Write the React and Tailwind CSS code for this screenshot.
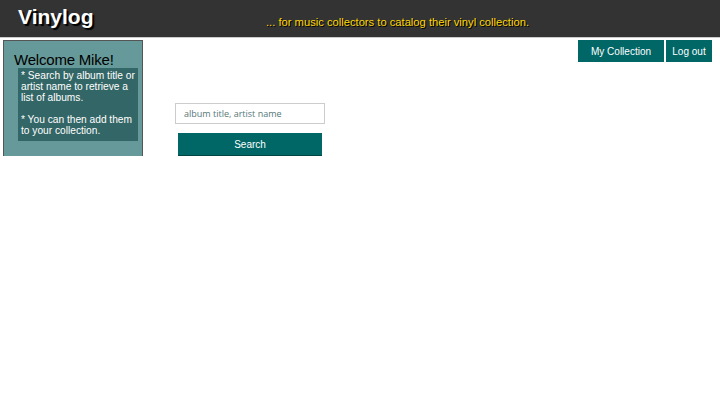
export default function App() {
  return (
    <div className="w-[720px] h-[400px] bg-white" style={{ fontFamily: '"Liberation Sans", Arial, sans-serif' }}>
      <header className="h-[37px] bg-[#333333] flex items-center border-b border-[#cccccc] box-content">
        <div className="pl-[18px] w-[250px] text-white font-bold text-[21px] [text-shadow:2px_2px_1px_#000] leading-none -mt-[4px]">Vinylog</div>
        <div className="text-[#ffd700] text-[11.2px] mt-[8px] [text-shadow:1px_1px_0_#000] ml-[16px]">... for music collectors to catalog their vinyl collection.</div>
      </header>
      <div className="flex items-start pt-[2px]">
        <div className="ml-[3px] w-[140px] h-[116px] bg-[#669999] border border-[#555] border-b-0 pt-[10px] pl-[10px]">
          <div className="text-[15px] text-black leading-[17px] tracking-[-0.2px]">Welcome Mike!</div>
          <div className="ml-[4px] w-[120px] bg-[#336666] text-white text-[10.2px] leading-[11px] pl-[3px] pt-[2px] h-[73px] whitespace-nowrap">
            <p>* Search by album title or<br />artist name to retrieve a<br />list of albums.</p>
            <p className="mt-[11px]">* You can then add them<br />to your collection.</p>
          </div>
        </div>
        <div className="ml-[32px] mt-[63px] flex flex-col items-center w-[150px]">
          <input className="w-[150px] h-[21px] border border-[#cccccc] text-[9px] px-[8px] outline-none placeholder:text-[#557777]" style={{ fontFamily: '"Open Sans", sans-serif' }} placeholder="album title, artist name" />
          <button className="mt-[9px] w-[144px] h-[23px] bg-[#006666] text-white text-[10px] border-b border-[#004444]">Search</button>
        </div>
        <div className="ml-auto mr-[8px] flex gap-[2px]">
          <button className="w-[86px] h-[22px] bg-[#006666] text-white text-[10px]">My Collection</button>
          <button className="w-[46px] h-[22px] bg-[#006666] text-white text-[10px]">Log out</button>
        </div>
      </div>
    </div>
  );
}
